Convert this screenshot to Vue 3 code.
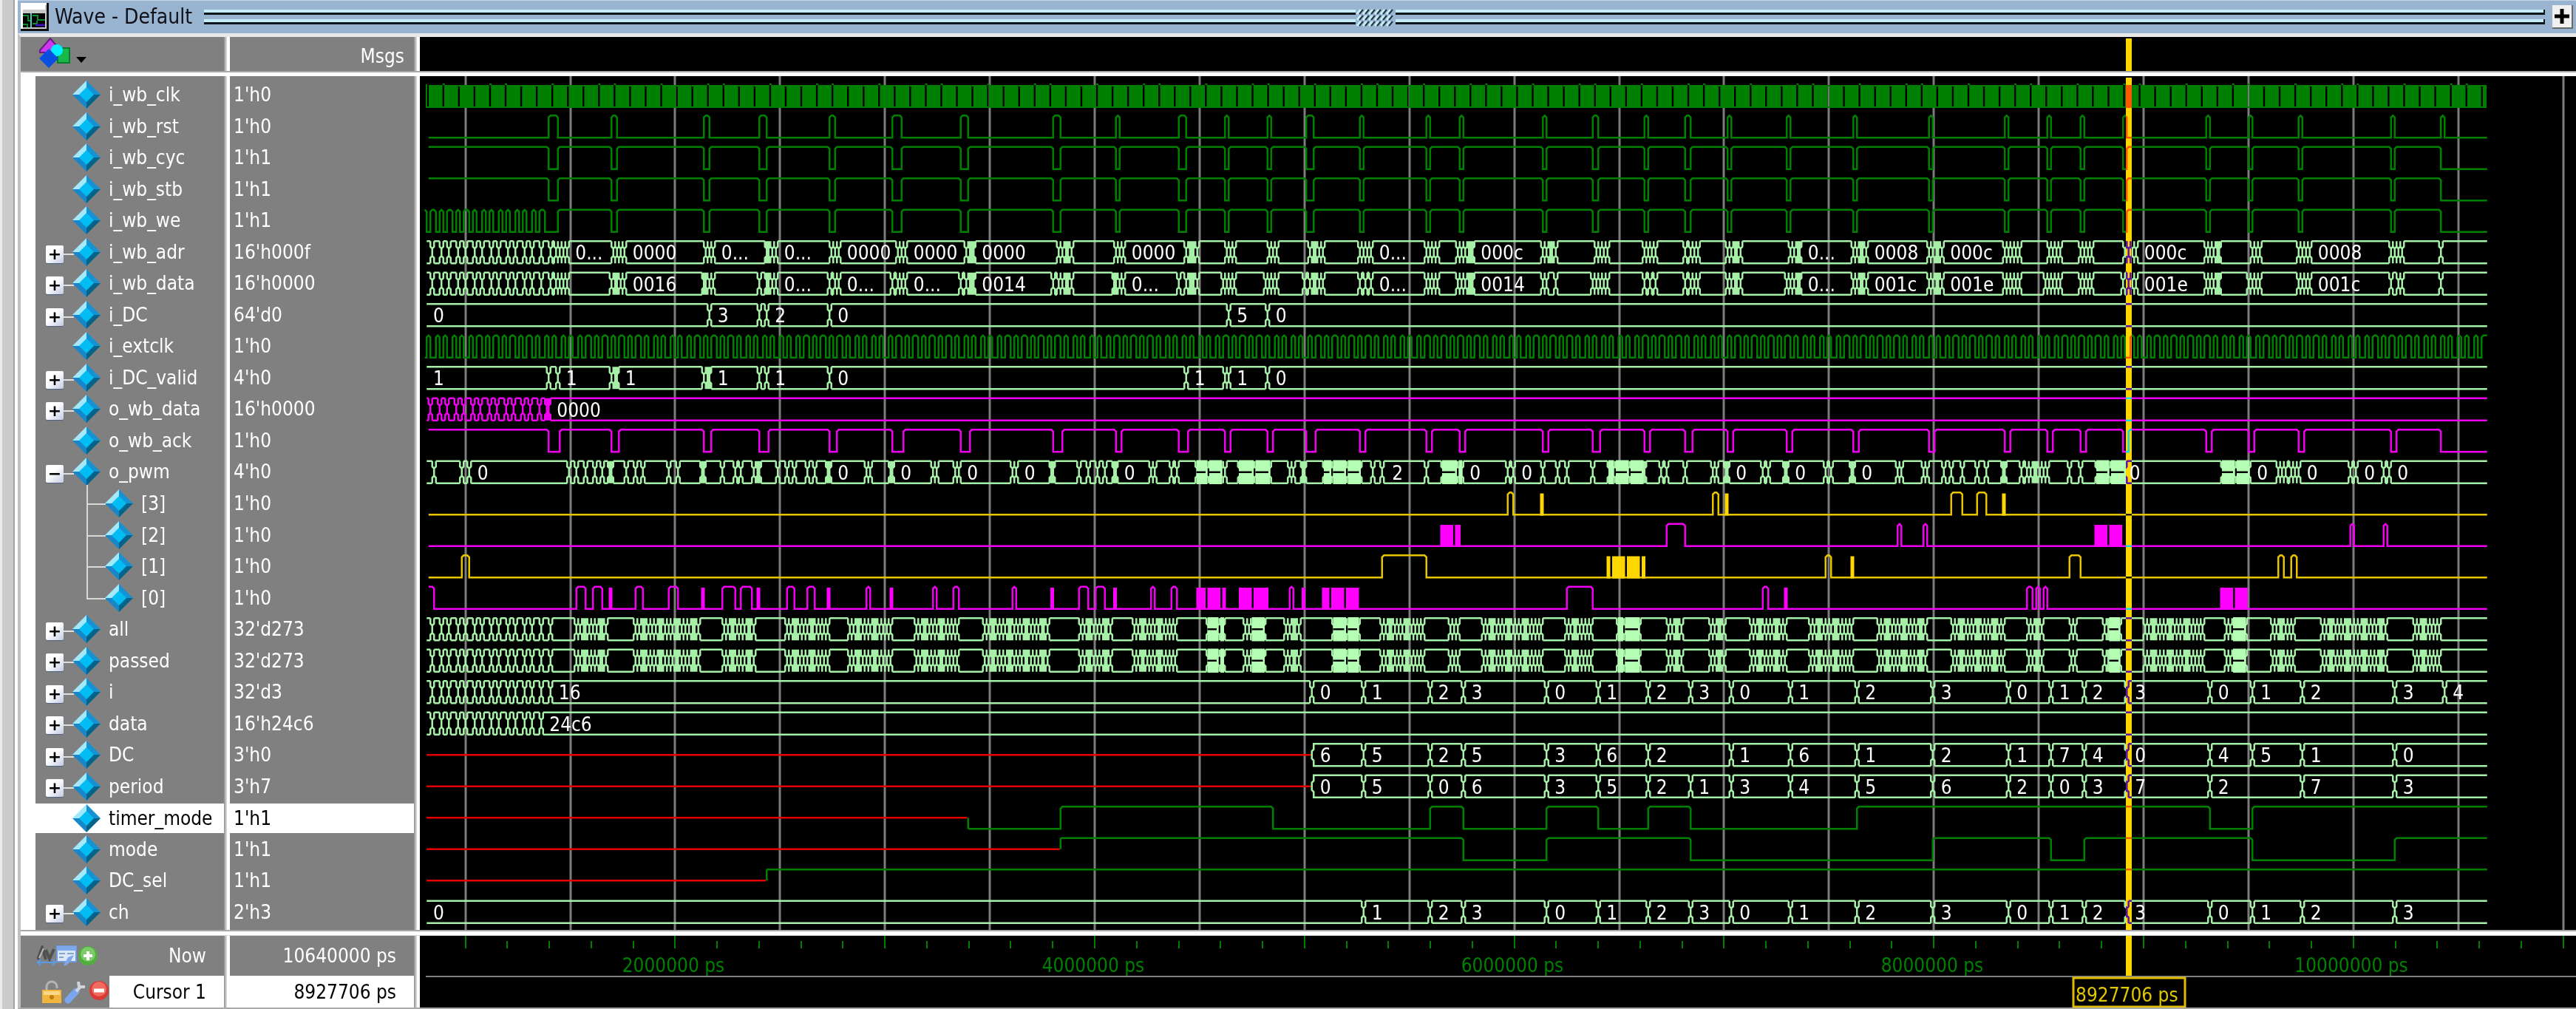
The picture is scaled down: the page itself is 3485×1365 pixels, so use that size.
<script setup>
const START = 230
const END = 1345
const UNIT = 2.5

const signals = [
  { name: 'i_wb_clk', value: "1'h0" },
  { name: 'i_wb_rst', value: "1'h0" },
  { name: 'i_wb_cyc', value: "1'h1" },
  { name: 'i_wb_stb', value: "1'h1" },
  { name: 'i_wb_we', value: "1'h1" },
  { name: 'i_wb_adr', value: "16'h000f", box: '+' },
  { name: 'i_wb_data', value: "16'h0000", box: '+' },
  { name: 'i_DC', value: "64'd0", box: '+' },
  { name: 'i_extclk', value: "1'h0" },
  { name: 'i_DC_valid', value: "4'h0", box: '+' },
  { name: 'o_wb_data', value: "16'h0000", box: '+' },
  { name: 'o_wb_ack', value: "1'h0" },
  { name: 'o_pwm', value: "4'h0", box: '-' },
  { name: '[3]', value: "1'h0", child: true },
  { name: '[2]', value: "1'h0", child: true },
  { name: '[1]', value: "1'h0", child: true },
  { name: '[0]', value: "1'h0", child: true, last: true },
  { name: 'all', value: "32'd273", box: '+' },
  { name: 'passed', value: "32'd273", box: '+' },
  { name: 'i', value: "32'd3", box: '+' },
  { name: 'data', value: "16'h24c6", box: '+' },
  { name: 'DC', value: "3'h0", box: '+' },
  { name: 'period', value: "3'h7", box: '+' },
  { name: 'timer_mode', value: "1'h1", selected: true },
  { name: 'mode', value: "1'h1" },
  { name: 'DC_sel', value: "1'h1" },
  { name: 'ch', value: "2'h3", box: '+' },
]

const hi = (row) => 45.5 + 17 * row
const lo = (row) => 57.5 + 17 * row

const waves = []
const blocks = []
const labels = []

// Two-level trace: the level flips at every edge.
function binary(row, color, initial, edges, start = START + 1) {
  let high = initial
  let d = `M${start + 0.5} ${high ? hi(row) : lo(row)}`
  for (const edge of edges) {
    const x = edge + 0.5
    d += high
      ? `H${x - 1}L${x} ${hi(row) + 1}V${lo(row)}`
      : `H${x}V${hi(row) + 1}L${x + 1} ${hi(row)}`
    high = !high
  }
  waves.push({ color, d: d + `H${END + 0.5}` })
}

function block(row, color, a, b, dash) {
  blocks.push({ color, x: a, y: hi(row) + (dash ? -0.5 : 0.5), w: b - a, h: dash ? 13 : 12, dash })
}

// Vector trace: a pair of rails pinched at every change.
function bus(row, color, changes, solids = [], start = START, open = true) {
  const top = hi(row)
  const bottom = lo(row)
  const events = [...changes.map((x) => [x, x]), ...solids].sort((p, q) => p[0] - q[0])
  let prev = start - 0.5
  let d = ''
  const rails = (a, b) => {
    if (b > a) d += `M${a} ${top}H${b}M${a} ${bottom}H${b}`
  }
  const right = (x) => {
    d += `M${x + 1} ${top}V${top + 3}L${x} ${top + 4}V${top + 8}L${x + 1} ${top + 9}V${bottom}`
  }
  const left = (x) => {
    d += `M${x - 1} ${top}V${top + 3}L${x} ${top + 4}V${top + 8}L${x - 1} ${top + 9}V${bottom}`
  }
  if (!open) {
    right(start + 0.5)
    prev = start
  }
  for (const [a, b] of events) {
    rails(prev + 1, a - 0.5)
    left(a + 0.5)
    right(b + 0.5)
    if (b > a) block(row, color, a, b + 1, true)
    prev = b + 0.5
  }
  rails(prev + 1, END + 0.5)
  waves.push({ color, d })
}

function steps(from, to, step) {
  const list = []
  for (let x = from; x <= to; x += step) list.push(Math.round(x))
  return list
}

function tag(row, entries) {
  for (const [x, text] of entries) {
    labels.push({ x: x === 0 ? 586 : UNIT * (x + 0.5) + 12, y: UNIT * hi(row) + 25, text })
  }
}

const GREEN = '#008000'
const MINT = '#a6efa6'
const PINK = '#f000f0'
const GOLD = '#e8c400'
const RED = '#e60000'

// i_wb_clk
const clockBars = []
for (let k = -1; k <= 131; k++) {
  const a = k < 0 ? 580 : 601 + k * 21.053
  const b = Math.min(598.6 + (k + 1) * 21.053, 3364)
  clockBars.push({ x: a, w: b - a })
}
const clockTicks = []
const clockFeet = []
for (let k = 0; k <= 131; k++) {
  const phase = (((k - 1.75) % 3.5) + 3.5) % 3.5
  const x = 599.8 + k * 21.053
  if (Math.abs(phase - 1.75) <= 0.6) clockTicks.push(x)
  else clockFeet.push(x)
}

// Bus cycle gaps shared by reset, cyc, stb, we and ack.
const gaps = [
  [296, 301], [330, 333], [380, 383], [410, 414], [448, 451], [482, 487], [519, 523],
  [569, 573], [603, 605], [637, 641], [662, 664], [685, 687], [706, 710], [735, 737],
  [771, 773], [789, 791], [834, 836], [861, 864], [889, 891], [911, 914], [934, 936],
  [966, 968], [1002, 1004], [1043, 1045], [1084, 1086], [1107, 1109], [1125, 1127],
  [1148, 1150], [1193, 1195], [1216, 1218], [1243, 1245], [1293, 1295],
]
const gapEdges = gaps.flat()
binary(1, GREEN, false, [...gapEdges, 1320, 1322])
binary(2, GREEN, true, [...gapEdges, 1320])
binary(3, GREEN, true, [...gapEdges, 1320])
binary(4, GREEN, true, [...steps(230, 295, 2.27), ...gapEdges.slice(1), 1320], 229)
binary(8, GREEN, false, steps(230, END - 1, 2.27), 229)
binary(11, PINK, true, [...gaps.flatMap(([a, b]) => [a, b + 1]), 1320])

const preload = steps(233, 297, 4.54)

// i_wb_adr
bus(5, MINT, [
  ...preload, 300, 302, 304, 306, 331, 333, 335, 337, 381, 383, 385, 414, 415, 417, 419,
  449, 451, 453, 485, 487, 489, 522, 524, 525, 526, 572, 574, 576, 577, 579, 603, 605, 607,
  641, 643, 644, 645, 647, 663, 665, 667, 686, 688, 690, 708, 710, 711, 713, 715,
  735, 737, 739, 741, 771, 773, 775, 777, 788, 790, 792, 794, 795, 796, 834, 836, 838, 839, 841,
  863, 865, 867, 869, 889, 891, 893, 895, 911, 914, 916, 918, 934, 936, 938, 939, 941,
  968, 970, 972, 973, 1002, 1004, 1006, 1007, 1009, 1043, 1045, 1047, 1048, 1050,
  1084, 1086, 1088, 1090, 1092, 1108, 1110, 1112, 1114, 1125, 1127, 1129, 1131,
  1149, 1151, 1153, 1155, 1193, 1195, 1197, 1199, 1200, 1218, 1220, 1222,
  1243, 1245, 1247, 1249, 1293, 1295, 1297, 1299, 1320,
])
tag(5, [
  [306, '0...'], [337, '0000'], [385, '0...'], [419, '0...'], [453, '0000'], [489, '0000'],
  [526, '0000'], [607, '0000'], [741, '0...'], [796, '000c'], [973, '0...'], [1009, '0008'],
  [1050, '000c'], [1155, '000c'], [1249, '0008'],
])

// i_wb_data
bus(6, MINT, [
  ...preload, 300, 302, 304, 306, 330, 332, 333, 335, 337, 380, 381, 383, 385,
  410, 414, 415, 417, 419, 448, 451, 453, 482, 485, 487, 489, 519, 522, 524, 525, 526,
  569, 572, 574, 576, 577, 579, 602, 603, 605, 607, 637, 641, 643, 644, 645, 647,
  661, 663, 665, 667, 684, 686, 688, 690, 705, 708, 710, 711, 713, 715, 735, 738, 741,
  771, 773, 775, 777, 788, 790, 792, 794, 795, 796, 834, 836, 841, 861, 863, 865, 867, 869,
  889, 892, 895, 911, 914, 916, 918, 934, 936, 938, 939, 941, 966, 968, 970, 972, 973,
  1002, 1004, 1006, 1007, 1009, 1043, 1045, 1047, 1048, 1050, 1084, 1086, 1088, 1090, 1092,
  1106, 1108, 1110, 1112, 1114, 1125, 1127, 1129, 1131, 1148, 1151, 1153, 1155,
  1193, 1195, 1197, 1199, 1200, 1216, 1218, 1220, 1222, 1243, 1245, 1247, 1249,
  1293, 1297, 1299, 1320,
])
tag(6, [
  [337, '0016'], [419, '0...'], [453, '0...'], [489, '0...'], [526, '0014'], [607, '0...'],
  [741, '0...'], [796, '0014'], [973, '0...'], [1009, '001c'], [1050, '001e'], [1155, '001e'],
  [1249, '001c'],
])

bus(7, MINT, [383, 410, 414, 448, 664, 685])
tag(7, [[0, '0'], [383, '3'], [414, '2'], [448, '0'], [664, '5'], [685, '0']])

bus(9, MINT, [296, 301, 330, 332, 333, 380, 382, 383, 410, 414, 448, 641, 662, 664, 685])
tag(9, [
  [0, '1'], [301, '1'], [333, '1'], [383, '1'], [414, '1'], [448, '0'], [641, '1'],
  [664, '1'], [685, '0'],
])

bus(10, PINK, [...steps(232, 293, 4.54), 295, 296])
tag(10, [[296, '0000']])

// o_pwm and its four bits
bus(12, MINT, [
  234, 249, 253, 307, 311, 316, 321, 325, 329, 330, 338, 343, 347, 361, 366, 379, 380, 390,
  397, 400, 407, 409, 410, 420, 425, 429, 436, 440, 447, 448, 468, 470, 481, 482, 504, 506,
  516, 518, 547, 549, 568, 569, 583, 588, 593, 597, 602, 603, 622, 624, 633, 636, 662,
  697, 699, 704, 705, 742, 747, 771, 815, 818, 834, 842, 847, 861, 889, 898, 901, 911,
  926, 928, 933, 934, 953, 956, 965, 966, 987, 990, 1001, 1002, 1026, 1028, 1040, 1042,
  1051, 1055, 1061, 1069, 1074, 1083, 1084, 1093, 1096, 1098, 1100, 1101, 1103, 1105, 1107,
  1119, 1125, 1232, 1234, 1236, 1239, 1241, 1243, 1271, 1274, 1289, 1292,
], [
  [647, 652], [654, 660], [670, 677], [679, 686], [716, 719], [721, 727], [729, 735],
  [780, 787], [789, 790], [870, 872], [874, 880], [882, 888], [1134, 1140], [1142, 1149],
  [1202, 1208], [1210, 1216],
])
tag(12, [
  [253, '0'], [448, '0'], [482, '0'], [518, '0'], [549, '0'], [603, '0'], [748, '2'],
  [790, '0'], [818, '0'], [934, '0'], [966, '0'], [1002, '0'], [1147, '0'], [1216, '0'],
  [1243, '0'], [1274, '0'], [1292, '0'],
])

function bit(row, color, initial, pulses, solids = []) {
  binary(row, color, initial, pulses.flat())
  for (const [a, b] of solids) block(row, color === GOLD ? '#ffd700' : '#ff00ff', a, b, false)
}
bit(13, GOLD, false,
  [[815, 818], [926, 929], [1055, 1061], [1069, 1074]],
  [[833, 835], [933, 935], [1083, 1085]])
bit(14, PINK, false,
  [[901, 911], [1026, 1028], [1040, 1042], [1271, 1273], [1289, 1291]],
  [[779, 786], [787, 790], [1133, 1140], [1141, 1148]])
bit(15, GOLD, false,
  [[249, 253], [747, 771], [987, 990], [1119, 1125], [1232, 1235], [1239, 1242]],
  [[869, 871], [872, 879], [880, 887], [888, 890], [1001, 1003]])
bit(16, PINK, true,
  [234, [311, 316], [320, 325], [343, 347], [361, 366], [390, 397], [400, 406], [425, 429],
    [436, 440], [468, 470], [504, 506], [515, 518], [547, 549], [583, 588], [592, 597],
    [622, 624], [633, 636], [697, 699], [847, 861], [953, 956], [1096, 1099], [1101, 1103],
    [1105, 1107]],
  [[329, 331], [379, 381], [409, 411], [447, 449], [481, 483], [568, 570], [602, 604],
    [647, 652], [653, 660], [661, 663], [670, 677], [678, 686], [704, 706], [715, 719],
    [720, 727], [728, 735], [965, 967], [1201, 1208], [1209, 1216]])

// all and passed share one history
const bursts = [
  [311, 329], [343, 379], [391, 409], [425, 447], [459, 481], [495, 517], [532, 567],
  [584, 601], [613, 635], [673, 675], [695, 703], [747, 769], [784, 788], [802, 833],
  [847, 860], [902, 910], [925, 933], [947, 965], [979, 1001], [1016, 1042], [1056, 1083],
  [1097, 1105], [1120, 1123], [1138, 1140], [1160, 1191], [1204, 1206], [1229, 1241],
  [1256, 1291], [1306, 1319],
]
const bursting = [...preload, ...bursts.flatMap(([a, b]) => steps(a, b, 1.8))]
const packed = [
  [653, 658], [660, 661], [677, 683], [721, 727], [729, 734], [875, 877], [879, 886],
  [1141, 1146], [1208, 1214],
]
bus(17, MINT, bursting, packed)
bus(18, MINT, bursting, packed)

const slots = [
  709, 737, 773, 791, 836, 864, 891, 914, 936, 968, 1004, 1045, 1086, 1109, 1127, 1150,
  1195, 1218, 1245, 1295,
]
const tagSlots = (row, text) =>
  tag(row, slots.map((x, k) => [x, text[k]]).filter((entry) => entry[1] !== ' '))

bus(19, MINT, [...preload, ...slots, 1322])
tag(19, [[297, '16'], [1322, '4']])
tagSlots(19, '01230123012301230123')

bus(20, MINT, steps(233, 294, 4.54))
tag(20, [[292, '24c6']])

const undefinedUntil = (row, x) =>
  waves.push({ color: RED, d: `M${START + 0.5} ${hi(row) + 6}H${x}` })

undefinedUntil(21, 709)
bus(21, MINT, slots.slice(1).filter((x) => x !== 914), [], 709, false)
tagSlots(21, '6525362 161217404510')
undefinedUntil(22, 709)
bus(22, MINT, slots.slice(1).filter((x) => x !== 1218), [], 709, false)
tagSlots(22, '05063521345620372 73')

undefinedUntil(23, 523)
waves.push({ color: GREEN, d: `M523.5 ${hi(23) + 6}V${lo(23)}` })
binary(23, GREEN, false, [573, 688, 773, 791, 836, 864, 891, 914, 1004, 1195, 1218], 523)
undefinedUntil(24, 573)
waves.push({ color: GREEN, d: `M573.5 ${hi(24) + 6}V${hi(24)}` })
binary(24, GREEN, true, [791, 836, 914, 1045, 1109, 1127, 1218, 1295], 573)
undefinedUntil(25, 414)
waves.push({ color: GREEN, d: `M414.5 ${hi(25) + 6}V${hi(25)}` })
binary(25, GREEN, true, [], 414)

bus(26, MINT, slots.slice(1))
tag(26, [[0, '0']])
tagSlots(26, ' 1230123012301230123')

const gridLines = Array.from({ length: 21 }, (_, k) => Math.round(629.6 + k * 141.9))
const ticks = Array.from({ length: 52 }, (_, k) => ({
  x: Math.round(629.6 + k * 56.76),
  major: k % 5 === 0,
}))
const times = [2, 4, 6, 8, 10].map((n) => ({
  x: Math.round(911 + (n - 2) * 283.75),
  text: `${n}000000 ps`,
}))
</script>

<template>
  <div class="desk">
    <svg class="defs" aria-hidden="true">
      <symbol id="gem" viewBox="0 0 38 38">
        <path d="M19 0L0 19L10 19L19 10Z" fill="#a4e8fb" />
        <path d="M19 0L38 19L28 19L19 10Z" fill="#1592d2" />
        <path d="M0 19L19 38L19 28L10 19Z" fill="#1787c9" />
        <path d="M38 19L19 38L19 28L28 19Z" fill="#056389" />
        <path d="M19 9L29 19L19 29L9 19Z" fill="#02bdf3" />
      </symbol>
    </svg>

    <aside class="rail"></aside>

    <main class="window">
      <header class="title">
        <svg class="app-icon" width="38" height="38" viewBox="0 0 38 38">
          <path d="M0 0H38V38H0Z" fill="#111" />
          <path d="M0 0H35V35H0Z" fill="#fff" />
          <path d="M3 3H35V35H3Z" fill="#c8c8c8" />
          <path d="M3 2H33V9H3Z" fill="#fff" />
          <path d="M3 14H33V33H3Z" fill="#000" />
          <path d="M3 17H10V24H14M3 29H9V33M16 17H23V23H33M16 28H22V24" fill="none" stroke="#0a8f2a" stroke-width="2" />
          <path d="M20 30H33" stroke="#3a12b8" stroke-width="3" />
          <path d="M14 14V33" stroke="#3fd0c8" stroke-width="2" />
        </svg>
        <h1>Wave - Default</h1>
        <div class="grooves">
          <i></i><i></i>
          <svg class="grip" width="54" height="26" viewBox="0 0 54 26">
            <path d="M0 0H54V26H0Z" fill="#99b4d1" />
            <path d="M2 9l5 -6M10 9l5 -6M18 9l5 -6M26 9l5 -6M34 9l5 -6M42 9l5 -6M2 17l5 -6M10 17l5 -6M18 17l5 -6M26 17l5 -6M34 17l5 -6M42 17l5 -6M2 25l5 -6M10 25l5 -6M18 25l5 -6M26 25l5 -6M34 25l5 -6M42 25l5 -6" stroke="#c4f0fa" stroke-width="3" />
            <path d="M5 9l5 -6M13 9l5 -6M21 9l5 -6M29 9l5 -6M37 9l5 -6M45 9l5 -6M5 17l5 -6M13 17l5 -6M21 17l5 -6M29 17l5 -6M37 17l5 -6M45 17l5 -6M5 25l5 -6M13 25l5 -6M21 25l5 -6M29 25l5 -6M37 25l5 -6M45 25l5 -6" stroke="#2a3440" stroke-width="2" />
          </svg>
        </div>
        <button class="zoom" aria-label="Maximize pane">
          <svg width="22" height="22" viewBox="0 0 22 22"><path d="M11 1V21M1 11H21" stroke="#000" stroke-width="5" /></svg>
        </button>
      </header>

      <div class="board">
        <div class="cell head">
          <button class="bare filter" aria-label="Object filter">
            <svg width="66" height="44" viewBox="0 0 66 44">
              <path d="M25 14H41V34H25Z" fill="#16b84a" stroke="#0a7a30" stroke-width="2" />
              <path d="M1 17L15 1L29 17V20H1Z" fill="#cc3af0" stroke="#6a1a80" stroke-width="2" />
              <circle cx="24" cy="17" r="8" fill="#00f0ff" />
              <path d="M13 15L26 28L13 41L0 28Z" fill="#0a50e0" />
              <path d="M50 26H64L57 34Z" fill="#000" />
            </svg>
          </button>
        </div>
        <div class="bar-v"></div>
        <div class="cell head msgs">Msgs</div>
        <div class="bar-v"></div>
        <div class="cell scope">
          <svg class="plot">
            <rect x="2308" y="2" width="8" height="44" fill="#ffd700" />
          </svg>
        </div>

        <div class="bar-h"></div>

        <ul class="cell names">
          <li
            v-for="s in signals"
            :key="s.name"
            :class="{ selected: s.selected, child: s.child, last: s.last }"
          >
            <button v-if="s.box" class="box" :aria-label="s.name">{{ s.box === '+' ? '+' : '−' }}</button>
            <span v-if="s.box" class="twig"></span>
            <svg class="gem" width="38" height="38"><use href="#gem" /></svg>
            <span class="label">{{ s.name }}</span>
          </li>
        </ul>
        <div class="bar-v"></div>
        <ul class="cell values">
          <li v-for="s in signals" :key="s.name" :class="{ selected: s.selected }">{{ s.value }}</li>
        </ul>
        <div class="bar-v"></div>
        <div class="cell scope">
          <svg class="plot">
            <g transform="translate(-568 -103)">
              <rect x="568" y="103" width="100%" height="1155" fill="#000" />
              <path v-for="x in gridLines" :key="x" :d="`M${x} 103V1258`" class="grid" />
              <path d="M577 114V145M576 145H3364" stroke="#008000" stroke-width="2" />
              <rect v-for="(b, k) in clockBars" :key="'c' + k" :x="b.x" y="115" :width="b.w" height="31" fill="#008000" />
              <path v-for="x in clockTicks" :key="'t' + x" :d="`M${x - 1} 114H${x + 2}`" stroke="#008000" stroke-width="2" />
              <path v-for="x in clockFeet" :key="'f' + x" :d="`M${x - 1} 116H${x + 2}`" stroke="#008000" stroke-width="2" />
              <g transform="translate(1 0) scale(2.5)">
                <path v-for="(w, k) in waves" :key="'w' + k" :d="w.d" :stroke="w.color" fill="none" />
                <g v-for="(b, k) in blocks" :key="'b' + k">
                  <rect :x="b.x" :y="b.y" :width="b.w" :height="b.h" :fill="b.dash ? '#b4ffb4' : b.color" />
                  <path v-if="b.dash && b.w > 3" :d="`M${b.x} ${b.y + 6.5}H${b.x + b.w - 1}`" stroke="#000" />
                </g>
              </g>
              <rect class="cursor" x="2876" y="105" width="8" height="1153" />
              <text v-for="(t, k) in labels" :key="'l' + k" :x="t.x" :y="t.y" fill="#fff">{{ t.text }}</text>
            </g>
          </svg>
        </div>

        <div class="bar-h"></div>

        <div class="cell foot">
          <div class="now">
            <button class="bare" aria-label="Edit grid">
              <svg width="26" height="28" viewBox="0 0 26 28">
                <path d="M1 19L7 3L12 19M12 6L17 18L23 5" fill="none" stroke="#505050" stroke-width="4" />
                <path d="M3 17L9 4" stroke="#b8b8b8" stroke-width="2" />
                <path d="M1 23H25M5 19L1 23L5 27M21 19L25 23L21 27" fill="none" stroke="#5a9be6" stroke-width="2" />
              </svg>
            </button>
            <button class="bare" aria-label="Configure">
              <svg width="28" height="28" viewBox="0 0 28 28">
                <path d="M1 1H27V22H1Z" fill="#dbe8fa" stroke="#6f9ade" stroke-width="2" />
                <path d="M1 1H27V7H1Z" fill="#7da9ea" />
                <path d="M4 11H12M15 11H24M4 16H10" stroke="#8aa4c4" stroke-width="2" />
                <path d="M10 27L16 16L24 13L20 21L14 27Z" fill="#7ea8e8" />
              </svg>
            </button>
            <button class="bare" aria-label="Add cursor">
              <svg width="28" height="28" viewBox="0 0 28 28">
                <circle cx="15" cy="14" r="13" fill="#4fae3e" />
                <circle cx="15" cy="12" r="10" fill="#7ccb69" />
                <path d="M15 8V20M9 14H21" stroke="#fff" stroke-width="4" />
              </svg>
            </button>
            <span>Now</span>
          </div>
          <div class="mark">
            <div class="tools">
              <button class="bare" aria-label="Lock cursor">
                <svg width="28" height="32" viewBox="0 0 28 32">
                  <path d="M7 14V9A7 7 0 0 1 21 9V11" fill="none" stroke="#b4b4b4" stroke-width="3" />
                  <path d="M1 13H27V31H1Z" fill="#f2b53c" />
                  <path d="M3 15H25V20H3Z" fill="#fbd888" />
                  <circle cx="14" cy="23" r="3" fill="#c07c10" />
                </svg>
              </button>
              <button class="bare" aria-label="Cursor properties">
                <svg width="30" height="32" viewBox="0 0 30 32">
                  <path d="M5 27L16 15" stroke="#7aa6ee" stroke-width="9" stroke-linecap="round" />
                  <path d="M16 15L22 9M19 2L20 9L28 9" fill="none" stroke="#d0d4dc" stroke-width="4" />
                </svg>
              </button>
              <button class="bare" aria-label="Delete cursor">
                <svg width="28" height="32" viewBox="0 0 28 32">
                  <circle cx="14" cy="14" r="13" fill="#d93a34" />
                  <circle cx="14" cy="12" r="10" fill="#f06a60" />
                  <path d="M7 14H21" stroke="#fff" stroke-width="5" />
                </svg>
              </button>
            </div>
            <span>Cursor 1</span>
          </div>
        </div>
        <div class="bar-v"></div>
        <div class="cell foot">
          <div class="now"><span>10640000 ps</span></div>
          <div class="mark"><span>8927706 ps</span></div>
        </div>
        <div class="bar-v"></div>
        <div class="cell scope">
          <svg class="plot">
            <g transform="translate(-568 -1266)">
              <path
                v-for="t in ticks"
                :key="t.x"
                :d="t.major ? `M${t.x} 1266V1283` : `M${t.x} 1273V1283`"
                stroke="#008000"
                stroke-width="2"
              />
              <text v-for="t in times" :key="t.text" :x="t.x" y="1315" text-anchor="middle" fill="#008000">{{ t.text }}</text>
              <path d="M576 1321H3485" stroke="#808080" stroke-width="2" />
              <rect x="2876" y="1266" width="8" height="54" fill="#ffd700" />
              <rect x="2805" y="1323" width="151" height="39" fill="#000" stroke="#e0bc00" stroke-width="3" />
              <text x="2808" y="1355" fill="#e0c800">8927706 ps</text>
            </g>
          </svg>
        </div>
      </div>
    </main>
  </div>
</template>

<style>
body {
  margin: 0;
  background: #808080;
}
</style>

<style scoped>
.desk {
  display: flex;
  font-family: "DejaVu Sans Condensed", "DejaVu Sans", "Noto Sans", sans-serif;
  font-size: 26px;
  line-height: 30px;
  color: #fff;
  overflow: hidden;
}
.defs {
  position: absolute;
  width: 0;
  height: 0;
}
.rail {
  flex: none;
  box-sizing: border-box;
  width: 24px;
  background: #cbcbcb;
  border-left: 3px solid #ececec;
  border-right: 4px solid #fff;
  box-shadow: inset -2px 0 #a4a4a4;
}
.window {
  flex: 1;
  min-width: 0;
}
.title {
  display: flex;
  align-items: center;
  box-sizing: border-box;
  height: 45px;
  padding: 0 4px;
  background: #99b4d1;
  border-top: 1px solid #c4d4e6;
  color: #101018;
}
.app-icon {
  flex: none;
}
.title h1 {
  margin: 0 16px 0 8px;
  min-width: 184px;
  font-size: 28px;
  font-weight: normal;
  white-space: nowrap;
}
.grooves {
  position: relative;
  flex: 1;
  display: flex;
  flex-direction: column;
  gap: 6px;
}
.grooves i {
  height: 4px;
  background: #c4eefa;
  border-bottom: 3px solid #10161e;
  border-right: 2px solid #10161e;
}
.grip {
  position: absolute;
  left: calc(50% - 26px);
  top: -3px;
}
.zoom {
  display: flex;
  align-items: center;
  justify-content: center;
  width: 28px;
  height: 32px;
  margin: 0 0 0 10px;
  padding: 0;
  background: #f0f0f0;
  border: 0;
  border-right: 2px solid #696969;
  border-bottom: 2px solid #696969;
}
.board {
  display: grid;
  grid-template-columns: 275px 8px 249px 8px minmax(0, 1fr);
  grid-template-rows: 46px 7px 1155px 8px 97px;
  border-top: 5px solid #e8e8e8;
  border-left: 4px solid #c0c0c0;
  border-bottom: 2px solid #a8a8a8;
}
.cell {
  background: #808080;
  min-width: 0;
}
.bar-v {
  background: linear-gradient(90deg, #a0a0a0 0 2px, #d0d0d0 2px 4px, #fff 4px 8px);
}
.bar-h {
  grid-column: 1 / -1;
  background: linear-gradient(#a8a8a8 0 2px, #fff 2px 7px, #d8d8d8 7px);
}
.scope {
  background: #000;
}
.plot {
  display: block;
  width: 100%;
  height: 100%;
}
.plot text {
  font-size: 26px;
}
.grid {
  stroke: #7c7c7c;
  stroke-width: 3;
}
.cursor {
  fill: #ffd700;
  mix-blend-mode: difference;
}
.head {
  display: flex;
  align-items: center;
  box-sizing: border-box;
}
.msgs {
  justify-content: flex-end;
  padding: 6px 13px 0 0;
}
.bare {
  display: flex;
  padding: 0;
  background: none;
  border: 0;
}
.filter {
  margin-left: 25px;
}
.names,
.values {
  display: grid;
  grid-template-rows: repeat(27, 1fr);
  box-sizing: border-box;
  margin: 0;
  padding: 4px 0 3px;
  list-style: none;
}
.names {
  border-left: 20px solid #fff;
}
.names li {
  position: relative;
  display: flex;
  align-items: center;
  min-height: 0;
  padding-left: 50px;
}
.names .gem {
  flex: none;
}
.names .label {
  margin-left: 11px;
}
.names .child {
  padding-left: 94px;
}
.child::before,
.child::after {
  content: "";
  position: absolute;
  background: #d8d8d8;
}
.child::before {
  left: 69px;
  top: -4px;
  bottom: 0;
  width: 2px;
}
.last::before {
  bottom: 50%;
}
.child::after {
  left: 69px;
  top: 50%;
  width: 26px;
  height: 2px;
}
.box {
  position: absolute;
  left: 14px;
  top: 12px;
  width: 24px;
  height: 24px;
  padding: 0;
  border: 0;
  border-radius: 2px;
  background: linear-gradient(135deg, #fff 40%, #c2cbe4);
  box-shadow: 0 1px 1px #53617f;
  color: #000;
  font: bold 22px/22px "DejaVu Sans", sans-serif;
}
.twig {
  position: absolute;
  left: 38px;
  top: 23px;
  width: 14px;
  height: 2px;
  background: #e0e0e0;
}
.values li {
  display: flex;
  align-items: center;
  min-height: 0;
  padding-left: 5px;
}
.names .selected,
.values .selected {
  margin-top: 2px;
  background: #fff;
  color: #000;
}
.foot {
  display: flex;
  flex-direction: column;
}
.now {
  display: flex;
  align-items: center;
  height: 54px;
  padding-left: 22px;
}
.now span {
  margin-left: auto;
  padding-right: 24px;
}
.mark {
  display: flex;
  flex: 1;
  align-items: center;
  background: #fff;
  color: #000;
}
.mark span {
  margin-left: auto;
  padding-right: 24px;
}
.tools {
  display: flex;
  gap: 3px;
  align-items: center;
  align-self: stretch;
  box-sizing: border-box;
  width: 120px;
  padding-left: 28px;
  background: #808080;
}
</style>
